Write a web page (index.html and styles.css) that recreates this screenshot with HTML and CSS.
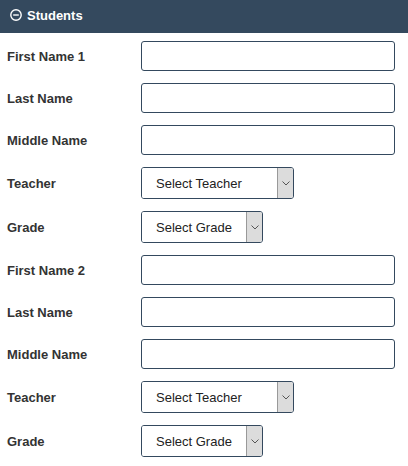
FILE: index.html
```html
<!DOCTYPE html>
<html lang="en">
<head>
    <meta charset="UTF-8">
    <meta name="viewport" content="width=device-width, initial-scale=1.0">
    <title>Students</title>
    <link rel="stylesheet" href="styles.css">
</head>
<body>
    <div class="panel">
        <div class="panel-header">
            <svg class="toggle" width="12" height="12" viewBox="0 0 12 12">
                <circle cx="6" cy="6" r="5.2" fill="none" stroke="#fff" stroke-width="1.4"/>
                <line x1="3.2" y1="6" x2="8.8" y2="6" stroke="#fff" stroke-width="1.4"/>
            </svg>
            <span>Students</span>
        </div>

        <div class="panel-body">
            <!-- Aluno 1 -->
            <div class="form-row">
                <label for="first1">First Name 1</label>
                <input type="text" id="first1">
            </div>
            <div class="form-row">
                <label for="last1">Last Name</label>
                <input type="text" id="last1">
            </div>
            <div class="form-row">
                <label for="middle1">Middle Name</label>
                <input type="text" id="middle1">
            </div>
            <div class="form-row">
                <label for="teacher1">Teacher</label>
                <div class="select select-teacher">
                    <select id="teacher1"><option>Select Teacher</option></select>
                    <span class="arrow"><svg width="8" height="5" viewBox="0 0 8 5"><polyline points="0.5,0.5 4,4 7.5,0.5" fill="none" stroke="#555" stroke-width="1"/></svg></span>
                </div>
            </div>
            <div class="form-row">
                <label for="grade1">Grade</label>
                <div class="select select-grade">
                    <select id="grade1"><option>Select Grade</option></select>
                    <span class="arrow"><svg width="8" height="5" viewBox="0 0 8 5"><polyline points="0.5,0.5 4,4 7.5,0.5" fill="none" stroke="#555" stroke-width="1"/></svg></span>
                </div>
            </div>

            <!-- Aluno 2 -->
            <div class="form-row">
                <label for="first2">First Name 2</label>
                <input type="text" id="first2">
            </div>
            <div class="form-row">
                <label for="last2">Last Name</label>
                <input type="text" id="last2">
            </div>
            <div class="form-row">
                <label for="middle2">Middle Name</label>
                <input type="text" id="middle2">
            </div>
            <div class="form-row">
                <label for="teacher2">Teacher</label>
                <div class="select select-teacher">
                    <select id="teacher2"><option>Select Teacher</option></select>
                    <span class="arrow"><svg width="8" height="5" viewBox="0 0 8 5"><polyline points="0.5,0.5 4,4 7.5,0.5" fill="none" stroke="#555" stroke-width="1"/></svg></span>
                </div>
            </div>
            <div class="form-row">
                <label for="grade2">Grade</label>
                <div class="select select-grade">
                    <select id="grade2"><option>Select Grade</option></select>
                    <span class="arrow"><svg width="8" height="5" viewBox="0 0 8 5"><polyline points="0.5,0.5 4,4 7.5,0.5" fill="none" stroke="#555" stroke-width="1"/></svg></span>
                </div>
            </div>
        </div>
    </div>
</body>
</html>
```

FILE: styles.css
```css
body {
    margin: 0;
    font-family: "Liberation Sans", Arial, sans-serif;
    background-color: white;
    color: #333;
}
.panel-header {
    display: flex;
    align-items: center;
    gap: 5px;
    height: 33px;
    padding-left: 10px;
    background-color: #34495e;
    color: white;
    font-size: 13px;
    font-weight: bold;
    box-sizing: border-box;
    padding-bottom: 3px;
}
.panel-body {
    padding: 8px 13px 0 7px;
}
.form-row {
    display: flex;
    align-items: center;
    margin-bottom: 12px;
}
.form-row label {
    width: 134px;
    font-size: 13px;
    font-weight: bold;
    color: #333;
}
.form-row input {
    flex: 1;
    height: 30px;
    border: 1px solid #34495e;
    border-radius: 3px;
    box-sizing: border-box;
    padding: 0 8px;
}
.select {
    display: flex;
    height: 32px;
    border: 1px solid #34495e;
    border-radius: 3px;
    box-sizing: border-box;
    overflow: hidden;
}
.select-teacher {
    width: 153px;
}
.select-grade {
    width: 122px;
}
.select select {
    flex: 1;
    min-width: 0;
    appearance: none;
    -webkit-appearance: none;
    border: none;
    background: white;
    padding: 0 0 0 14px;
    font-family: "Liberation Sans", Arial, sans-serif;
    font-size: 13px;
    color: #222;
    outline: none;
}
.arrow {
    width: 16px;
    display: flex;
    align-items: center;
    justify-content: center;
    background-color: #dcdcdc;
    border-left: 1px solid #999;
    box-sizing: border-box;
}
```
